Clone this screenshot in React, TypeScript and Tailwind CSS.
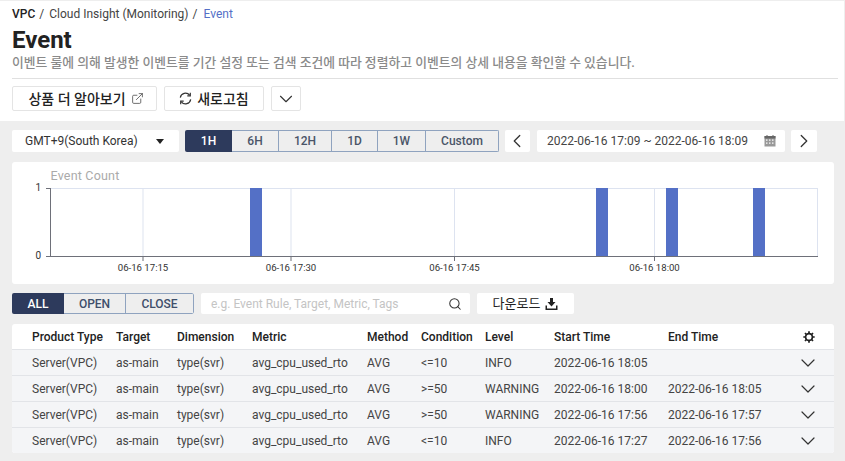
import { ChevronDown, ChevronLeft, ChevronRight, ExternalLink, Search } from 'lucide-react'

const colWidths = [
  'w-[84px]',
  'w-[61px]',
  'w-[75px]',
  'w-[115px]',
  'w-[54px]',
  'w-[64px]',
  'w-[69px]',
  'w-[114px]',
  'w-[128px]',
]

const ranges = [
  { label: '1H', w: 'w-[47px]' },
  { label: '6H', w: 'w-[47px]' },
  { label: '12H', w: 'w-[53px]' },
  { label: '1D', w: 'w-[46px]' },
  { label: '1W', w: 'w-[48px]' },
  { label: 'Custom', w: 'w-[73px]' },
]

const rows = [
  { cond: '<=10', level: 'INFO', start: '2022-06-16 18:05', end: '' },
  { cond: '>=50', level: 'WARNING', start: '2022-06-16 18:00', end: '2022-06-16 18:05' },
  { cond: '>=50', level: 'WARNING', start: '2022-06-16 17:56', end: '2022-06-16 17:57' },
  { cond: '<=10', level: 'INFO', start: '2022-06-16 17:27', end: '2022-06-16 17:56' },
]

const headers = ['Product Type', 'Target', 'Dimension', 'Metric', 'Method', 'Condition', 'Level', 'Start Time', 'End Time']

const ticks = [
  { x: 143, label: '06-16 17:15' },
  { x: 291, label: '06-16 17:30' },
  { x: 454.5, label: '06-16 17:45' },
  { x: 654.5, label: '06-16 18:00' },
]
const bars = [250, 596, 666, 753]

function EventChart() {
  return (
    <svg width="822" height="122" viewBox="12 162 822 122" className="block">
      <text x="50.5" y="180" fontSize="12.5" fill="#aaaaaa" letterSpacing="0.2">Event Count</text>
      <rect x="50" y="188" width="768" height="1" fill="#dde3f0" />
      <rect x="817" y="188" width="1" height="68" fill="#dde3f0" />
      {ticks.map((t) => (
        <rect key={t.x} x={t.x - 0.5} y="188" width="1" height="68" fill="#dde3f0" />
      ))}
      {bars.map((x) => (
        <rect key={x} x={x} y="188" width="12" height="68" fill="#5470c6" />
      ))}
      <rect x="50" y="188" width="1" height="69" fill="#6e7079" />
      <rect x="46" y="188" width="4" height="1" fill="#6e7079" />
      <rect x="46" y="256" width="772" height="1" fill="#6e7079" />
      {ticks.map((t) => (
        <g key={t.x}>
          <rect x={t.x - 0.5} y="257" width="1" height="4" fill="#6e7079" />
          <text x={t.x} y="271" fontSize="9.6" fill="#333333" textAnchor="middle">{t.label}</text>
        </g>
      ))}
      <text x="41" y="191" fontSize="10" fill="#333333" textAnchor="end">1</text>
      <text x="41" y="259" fontSize="10" fill="#333333" textAnchor="end">0</text>
    </svg>
  )
}

function RefreshIcon() {
  return (
    <svg width="13" height="13" viewBox="0 0 13 13" fill="none" stroke="#333333" strokeWidth="1.2">
      <path d="M1.3 5.6A5.2 5.2 0 0 1 10.6 3.2" />
      <path d="M11.7 7.4A5.2 5.2 0 0 1 2.4 9.8" />
      <path d="M11.3 0.8V3.8H8.3" fill="none" />
      <path d="M1.7 12.2V9.2H4.7" fill="none" />
    </svg>
  )
}

function CalendarIcon() {
  return (
    <svg width="12" height="12" viewBox="0 0 12 12">
      <rect x="0.5" y="1" width="11" height="10.5" fill="#999999" />
      <rect x="0.5" y="1" width="11" height="2.5" fill="#666666" />
      <rect x="2.5" y="0" width="1" height="2" fill="#666666" />
      <rect x="8.5" y="0" width="1" height="2" fill="#666666" />
      <rect x="2" y="4.5" width="1.5" height="1.2" fill="#fff" />
      <rect x="5" y="4.5" width="1.5" height="1.2" fill="#fff" />
      <rect x="8" y="4.5" width="1.5" height="1.2" fill="#fff" />
      <rect x="2" y="7.5" width="1.5" height="1.2" fill="#fff" />
      <rect x="5" y="7.5" width="1.5" height="1.2" fill="#fff" />
      <rect x="8" y="7.5" width="1.5" height="1.2" fill="#fff" />
    </svg>
  )
}

function DownloadIcon() {
  return (
    <svg width="13" height="12" viewBox="0 0 13 12" fill="#222222">
      <path d="M5 0H8V4H10.5L6.5 8.5L2.5 4H5Z" />
      <path d="M0.5 7.5H2V10.5H11V7.5H12.5V12H0.5Z" />
    </svg>
  )
}

function GearIcon() {
  return (
    <svg width="12" height="12" viewBox="0 0 12 12" fill="none" stroke="#222222">
      <circle cx="6" cy="6" r="3.4" strokeWidth="1.7" />
      <path
        d="M6 0.3V2.2M6 9.8V11.7M0.3 6H2.2M9.8 6H11.7M2 2L3.3 3.3M8.7 8.7L10 10M10 2L8.7 3.3M3.3 8.7L2 10"
        strokeWidth="1.7"
      />
    </svg>
  )
}

export default function App() {
  return (
    <div className="h-[461px] w-[845px] overflow-hidden bg-[#eeeeee] pt-px font-['Roboto','Noto_Sans_CJK_KR',sans-serif] text-[#333333]">
      {/* Header */}
      <div className="h-[120px] w-[844px] bg-white pl-3 pr-[6px] pt-[5px]">
        <div className="flex h-4 items-center gap-[4px] text-xs leading-4 text-[#444444]">
          <span className="font-medium text-[#222222]">VPC</span>
          <span>/</span>
          <span className="ml-[1px]">Cloud Insight (Monitoring)</span>
          <span>/</span>
          <span className="ml-[2px] text-[#5470c6]">Event</span>
        </div>
        <h1 className="mt-[4px] h-7 text-2xl font-bold leading-7 text-[#222222]">Event</h1>
        <p className="mt-[1px] h-4 text-[12.8px] font-medium leading-4 text-[#8a8a8a]">
          이벤트 룰에 의해 발생한 이벤트를 기간 설정 또는 검색 조건에 따라 정렬하고 이벤트의 상세 내용을 확인할 수 있습니다.
        </p>
        <div className="mt-[7px] h-px bg-[#e0e0e0]" />
        <div className="mt-[7px] flex gap-[7px]">
          <button className="flex h-[25px] w-[145px] items-center justify-center gap-[5px] rounded-[2px] border border-[#e4e4e4] pl-[3px] text-sm font-medium text-[#222222]">
            상품 더 알아보기
            <ExternalLink size={13} strokeWidth={1.4} className="text-[#444444]" />
          </button>
          <button className="flex h-[25px] w-[100px] items-center justify-center gap-[5px] rounded-[2px] border border-[#e4e4e4] text-sm font-medium text-[#222222]">
            <RefreshIcon />
            새로고침
          </button>
          <button className="flex h-[25px] w-[30px] items-center justify-center rounded-[2px] border border-[#e4e4e4] text-[#333333]">
            <ChevronDown size={22} strokeWidth={1.2} />
          </button>
        </div>
      </div>

      {/* Time controls */}
      <div className="mt-[9px] flex h-[22px] pl-3">
        <div className="flex w-[167px] items-center justify-between rounded-[2px] bg-white pl-[13px] pr-[15px] text-xs text-[#333333]">
          <span>GMT+9(South Korea)</span>
          <span className="h-0 w-0 border-x-[4px] border-t-[5px] border-x-transparent border-t-[#222222]" />
        </div>
        <div className="ml-[6px] flex overflow-hidden rounded-[2px] text-xs font-medium text-[#4a5568]">
          {ranges.map((r, i) => (
            <div
              key={r.label}
              className={
                i === 0
                  ? `flex items-center justify-center bg-[#2d3a5c] text-white ${r.w}`
                  : `flex items-center justify-center border-y border-r border-[#8fa3bf] ${r.w}`
              }
            >
              {r.label}
            </div>
          ))}
        </div>
        <button className="ml-[6px] flex w-[25px] items-center justify-center rounded-[2px] bg-white pr-px text-[#333333]">
          <ChevronLeft size={22} strokeWidth={1.4} />
        </button>
        <div className="ml-[7px] flex w-[248px] items-center justify-between rounded-[2px] bg-white pl-[10px] pr-[9px] text-xs text-[#444444]">
          <span>2022-06-16 17:09 ~ 2022-06-16 18:09</span>
          <CalendarIcon />
        </div>
        <button className="ml-[6px] flex w-[26px] items-center justify-center rounded-[2px] bg-white text-[#333333]">
          <ChevronRight size={22} strokeWidth={1.4} />
        </button>
      </div>

      {/* Chart */}
      <div className="ml-3 mt-[10px] h-[122px] w-[822px] rounded-[3px] bg-white font-['Roboto',sans-serif]">
        <EventChart />
      </div>

      {/* Filters */}
      <div className="ml-3 mt-[9px] flex h-[21px]">
        <div className="flex overflow-hidden rounded-[2px] text-xs font-medium text-[#3f4f6b]">
          <div className="flex w-[52px] items-center justify-center bg-[#2d3a5c] text-white">ALL</div>
          <div className="flex w-[62px] items-center justify-center border-y border-r border-[#8fa3bf]">OPEN</div>
          <div className="flex w-[68px] items-center justify-center rounded-r-[2px] border-y border-r border-[#8fa3bf]">CLOSE</div>
        </div>
        <div className="ml-[7px] flex w-[269px] items-center justify-between rounded-[2px] bg-white pl-[10px] pr-[8px] text-xs text-[#c4c4c4]">
          <span>e.g. Event Rule, Target, Metric, Tags</span>
          <Search size={14} strokeWidth={1.8} className="text-[#333333]" />
        </div>
        <button className="ml-[7px] flex w-[97px] items-center justify-center gap-[5px] rounded-[2px] bg-white text-[13px] text-[#222222]">
          다운로드
          <DownloadIcon />
        </button>
      </div>

      {/* Events table */}
      <div className="ml-3 mt-[10px] w-[822px] overflow-hidden rounded-[3px] bg-white text-xs">
        <div className="flex h-[26px] items-center border-b border-[#e2e4e8] pl-5 font-medium text-[#222222]">
          {headers.map((h, i) => (
            <span key={h} className={colWidths[i]}>{h}</span>
          ))}
          <span className="ml-[7px]">
            <GearIcon />
          </span>
        </div>
        {rows.map((r, i) => (
          <div key={i} className="flex h-[26px] items-center border-b border-[#e2e4e8] bg-[#f4f5f7] pl-5 text-[#444444] last:h-[25px] last:border-b-0">
            <span className={colWidths[0]}>Server(VPC)</span>
            <span className={colWidths[1]}>as-main</span>
            <span className={colWidths[2]}>type(svr)</span>
            <span className={colWidths[3]}>avg_cpu_used_rto</span>
            <span className={colWidths[4]}>AVG</span>
            <span className={colWidths[5]}>{r.cond}</span>
            <span className={colWidths[6]}>{r.level}</span>
            <span className={colWidths[7]}>{r.start}</span>
            <span className={colWidths[8]}>{r.end}</span>
            <ChevronDown size={24} strokeWidth={1.2} className="text-[#333333]" />
          </div>
        ))}
      </div>
    </div>
  )
}
